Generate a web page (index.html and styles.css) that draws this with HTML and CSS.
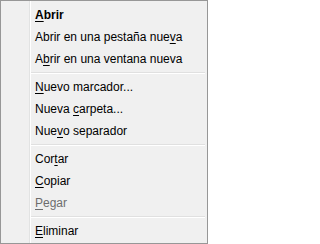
FILE: index.html
```html
<!DOCTYPE html>
<html lang="es">
<head>
<meta charset="utf-8">
<link rel="stylesheet" href="styles.css">
</head>
<body>
<div class="menu">
  <div class="item bold"><u>A</u>brir</div>
  <div class="item">Abrir en una pestaña nue<u>v</u>a</div>
  <div class="item">A<u>b</u>rir en una ventana nueva</div>
  <div class="sep"></div>
  <div class="item"><u>N</u>uevo marcador...</div>
  <div class="item">Nueva <u>c</u>arpeta...</div>
  <div class="item">Nue<u>v</u>o separador</div>
  <div class="sep"></div>
  <div class="item">Cor<u>t</u>ar</div>
  <div class="item"><u>C</u>opiar</div>
  <div class="item disabled"><u>P</u>egar</div>
  <div class="sep"></div>
  <div class="item"><u>E</u>liminar</div>
</div>
</body>
</html>
```
FILE: styles.css
```css
html, body {
  margin: 0;
  padding: 0;
  background: #ffffff;
}
.menu {
  box-sizing: border-box;
  width: 208px;
  height: 244px;
  border: 1px solid #979797;
  padding: 3px 2px 1px 2px;
  display: flex;
  flex-direction: column;
  background: linear-gradient(to right, #f0f0f0 28px, #e2e3e3 28px, #e2e3e3 29px, #ffffff 29px, #ffffff 30px, #f0f0f0 30px);
  font-family: "Liberation Sans", Arial, sans-serif;
  font-size: 12px;
  color: #000000;
}
.item {
  flex: none;
  height: 22px;
  line-height: 22px;
  padding-left: 32px;
  white-space: nowrap;
}
.item u {
  text-decoration-thickness: 1px;
  text-underline-offset: 2px;
}
.bold {
  font-weight: bold;
}
.disabled {
  color: #6d6d6d;
}
.sep {
  flex: none;
  height: 0;
  margin: 2px 0 2px 28px;
  border-top: 1px solid #e0e0e0;
  border-bottom: 1px solid #ffffff;
}
```
